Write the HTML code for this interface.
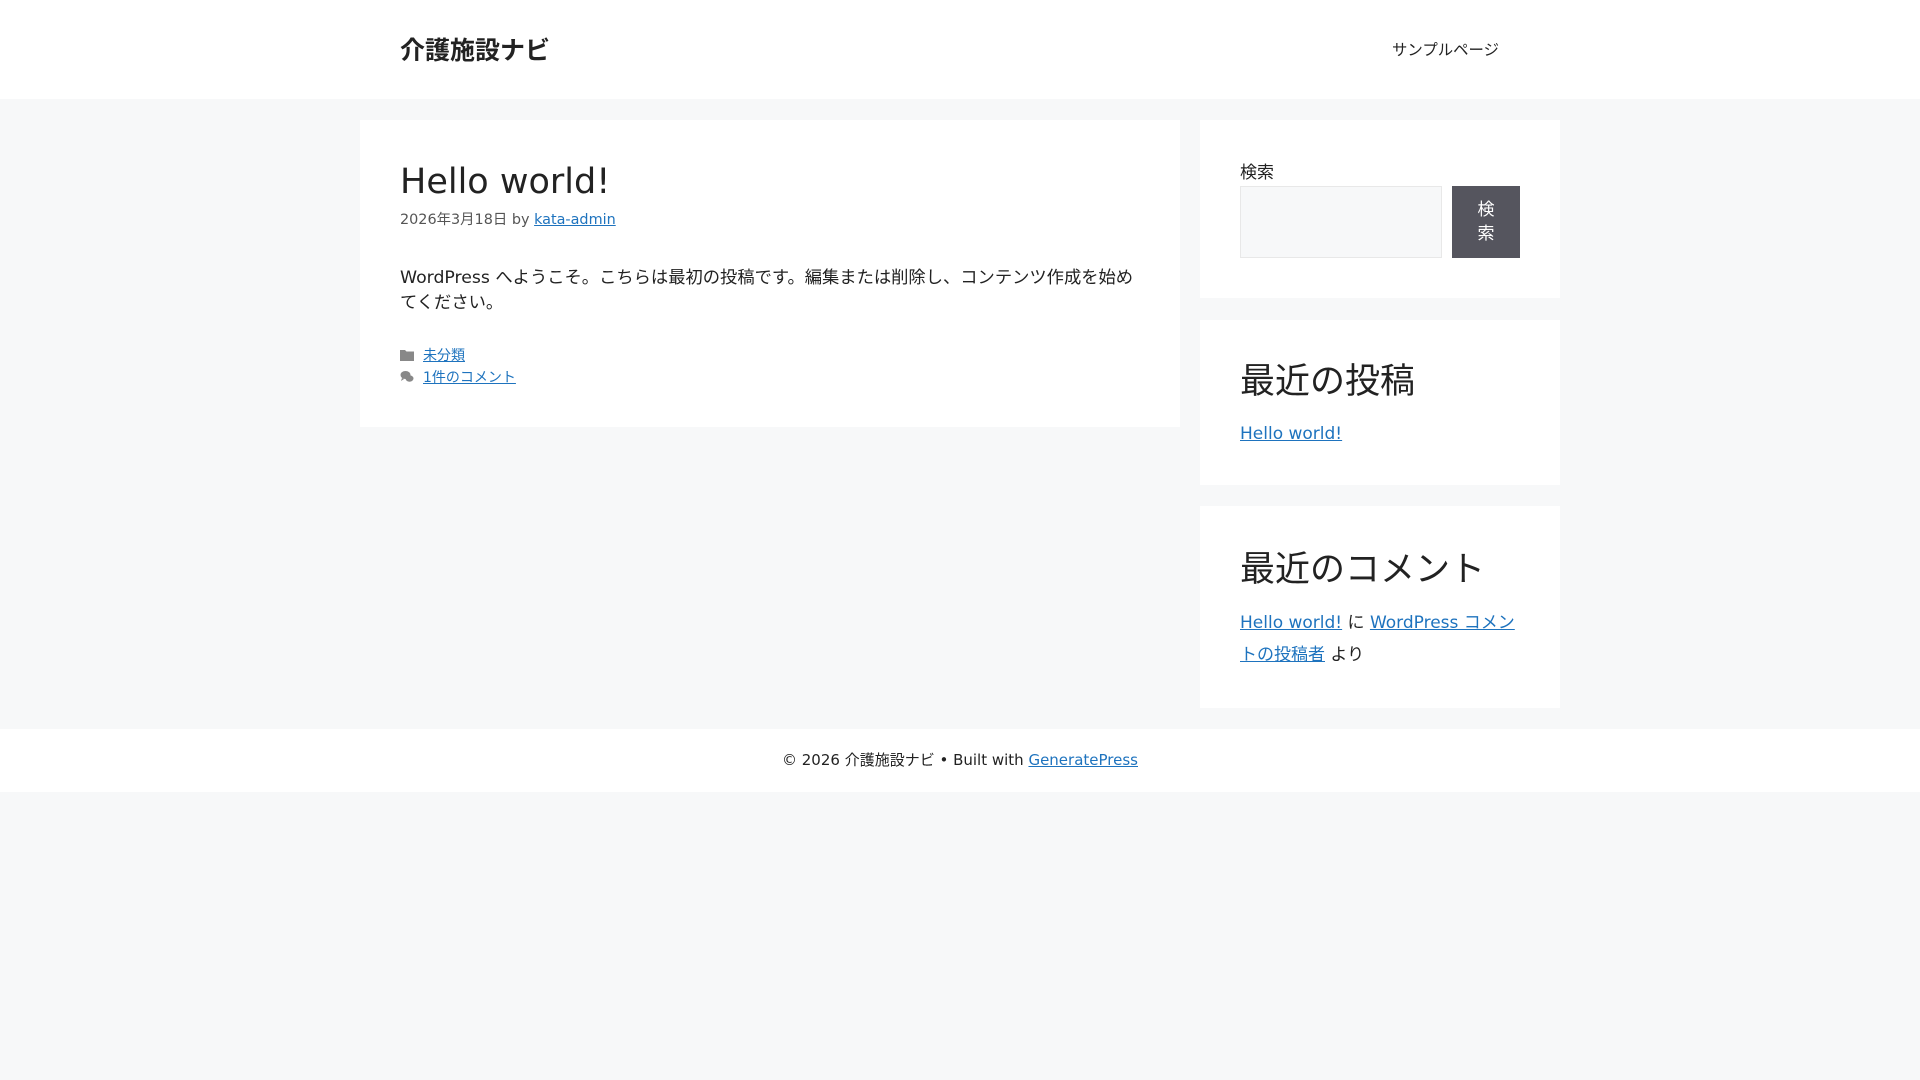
<!DOCTYPE html>
<html><head><meta charset="utf-8"><style>
*{box-sizing:border-box;margin:0;padding:0}
body{width:1920px;height:1080px;background:#f7f8f9;font-family:"DejaVu Sans","Noto Sans CJK JP",sans-serif;color:#222;font-size:17px;overflow:hidden;position:relative}
a{color:#1e73be}
.abs{position:absolute}
header{position:absolute;left:0;top:0;width:1920px;height:99px;background:#fff}
.box{position:absolute;background:#fff}
</style></head><body>
<header>
<div class="abs" style="left:400px;top:35px;font-size:25px;font-weight:bold;line-height:32px">介護施設ナビ</div>
<div class="abs" style="left:1392px;top:40px;font-size:15.4px;line-height:20px;color:#222">サンプルページ</div>
</header>
<div class="box" style="left:360px;top:120px;width:820px;height:307px">
<div class="abs" style="left:40px;top:40px;font-size:35px;line-height:44px;color:#222">Hello world!</div>
<div class="abs" style="left:40px;top:91px;font-size:14.4px;line-height:18px;color:#555">2026年3月18日 by <a href="#">kata-admin</a></div>
<div class="abs" style="left:40px;top:146px;width:740px;font-size:17.3px;line-height:25px">WordPress へようこそ。こちらは最初の投稿です。編集または削除し、コンテンツ作成を始めてください。</div>
<div class="abs" style="left:40px;top:225px;font-size:14px;line-height:22px">
<div><svg width="14" height="12" viewBox="0 0 14 12" style="vertical-align:-1px;margin-right:9px"><path d="M0 1h5l1.5 1.5H14V12H0z" fill="#888"/></svg><a href="#">未分類</a></div>
<div><svg width="14" height="13" viewBox="0 0 14 13" style="vertical-align:-1px;margin-right:9px"><ellipse cx="5.5" cy="5" rx="5" ry="4" fill="#888"/><ellipse cx="9.5" cy="8.5" rx="4" ry="3.2" fill="#888"/><path d="M2 8l-1 3 3-2z" fill="#888"/></svg><a href="#">1件のコメント</a></div>
</div>
</div>
<div class="box" style="left:1200px;top:120px;width:360px;height:178px">
<div class="abs" style="left:40px;top:42px;font-size:17px;line-height:22px">検索</div>
<div class="abs" style="left:40px;top:66px;width:202px;height:72px;background:#f7f8f9;border:1px solid #e8e8e8"></div>
<div class="abs" style="left:252px;top:66px;width:68px;height:72px;background:#55555e;color:#fff;font-size:17px;line-height:24px;text-align:center;padding-top:12px">検<br>索</div>
</div>
<div class="box" style="left:1200px;top:320px;width:360px;height:165px">
<div class="abs" style="left:40px;top:40px;font-size:35px;line-height:44px">最近の投稿</div>
<div class="abs" style="left:40px;top:102px;font-size:17px;line-height:24px"><a href="#">Hello world!</a></div>
</div>
<div class="box" style="left:1200px;top:506px;width:360px;height:202px">
<div class="abs" style="left:40px;top:42px;font-size:35px;line-height:44px">最近のコメント</div>
<div class="abs" style="left:40px;top:101px;width:290px;font-size:17px;line-height:32px"><a href="#">Hello world!</a> に <a href="#">WordPress コメントの投稿者</a> より</div>
</div>
<div class="abs" style="left:0;top:729px;width:1920px;height:63px;background:#fff;text-align:center;font-size:15px;line-height:63px">© 2026 介護施設ナビ • Built with <a href="#">GeneratePress</a></div>
</body></html>
